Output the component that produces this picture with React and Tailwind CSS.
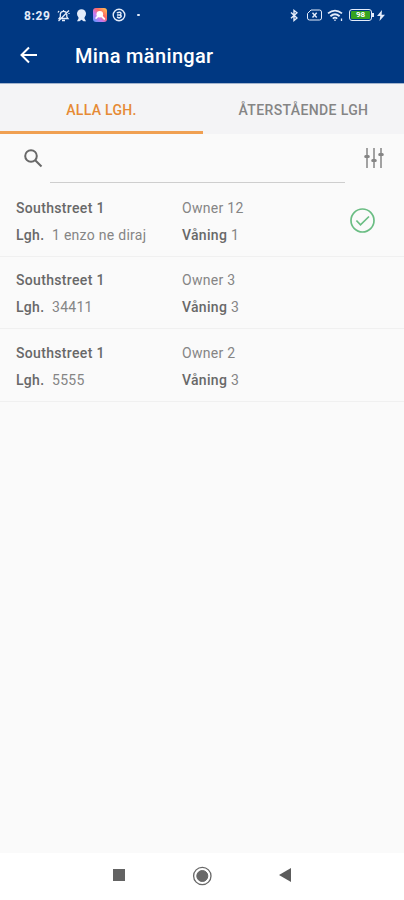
const apartments = [
  { street: 'Southstreet 1', owner: 'Owner 12', unit: '1 enzo ne diraj', floor: '1', done: true },
  { street: 'Southstreet 1', owner: 'Owner 3', unit: '34411', floor: '3' },
  { street: 'Southstreet 1', owner: 'Owner 2', unit: '5555', floor: '3' },
];

function StatusBar() {
  return (
    <div className="flex h-[30px] items-center justify-between pl-6 pr-[19px] text-[#e4ecfa]">
      <div className="flex items-center">
        <span className="w-[33px] pt-px text-[12px] font-bold leading-none tracking-[0.6px]">8:29</span>
        <svg className="h-[13px] w-[13px]" viewBox="0 0 13 13" fill="none" stroke="currentColor" strokeWidth="1.3">
          <path d="M2 9.5h9L9.8 7.8V5.2A3.3 3.3 0 0 0 3.3 5.2v2.6zM5 11.5h3M1.5 12 12 1.5M6.5 2V1M1 3.5l1-1.5M12 5V4" />
        </svg>
        <svg className="ml-[6px] h-[13px] w-[11px]" viewBox="0 0 11 13" fill="currentColor">
          <circle cx="5.5" cy="4.8" r="4.5" />
          <path d="M2.5 7h6v2.5l1.5 2.8H7.6L5.5 10.8l-2.1 1.5H1l1.5-2.8z" />
        </svg>
        <svg className="ml-[6px] h-[14px] w-[14px]" viewBox="0 0 14 14">
          <defs>
            <linearGradient id="gallery" x1="0" y1="1" x2="1" y2="0">
              <stop offset="0" stopColor="#4e9bff" />
              <stop offset=".35" stopColor="#c678f0" />
              <stop offset=".62" stopColor="#ff6a62" />
              <stop offset="1" stopColor="#ffcf50" />
            </linearGradient>
          </defs>
          <rect width="14" height="14" rx="3" fill="url(#gallery)" />
          <circle cx="6.8" cy="6.2" r="3.3" fill="#fff" />
          <path d="m8.5 8 2.8 2.8M3.2 10l2-2.2" stroke="#fff" strokeWidth="1.8" strokeLinecap="round" fill="none" />
        </svg>
        <svg className="ml-[5px] h-[14px] w-[14px]" viewBox="0 0 14 14" fill="none" stroke="currentColor" strokeWidth="1.4">
          <circle cx="7" cy="7" r="5.8" />
          <path d="M4.8 4.8q4.2-1.5 4.2.7T5 7h3q3 1.5-1 3l-2-1" />
        </svg>
        <span className="ml-[11px] h-[2px] w-[3px] rounded-full bg-current" />
      </div>
      <div className="flex items-center">
        <svg className="h-[13px] w-[8px]" viewBox="0 0 8 13" fill="none" stroke="currentColor" strokeWidth="1.4">
          <path d="m1 3.5 6 5.5-3 2.5v-10l3 2.3-6 5.5" />
        </svg>
        <svg className="ml-[9px] h-[12px] w-[15px]" viewBox="0 0 15 12" fill="none" stroke="currentColor">
          <path d="M4 1h8.5a2 2 0 0 1 2 2v6a2 2 0 0 1-2 2h-10a2 2 0 0 1-2-2V4.5z" />
          <path d="m5.5 3.8 4.2 4.7m0-4.7L5.5 8.5" strokeWidth="1.4" />
        </svg>
        <svg className="ml-[5px] h-[13px] w-[17px]" viewBox="0 0 17 13" fill="none" stroke="currentColor" strokeWidth="1.8">
          <path d="M1 4.4q7-5.5 14 0M3.4 7.2q4.6-4 9.2 0M5.8 9.6q2.2-2 4.4 0" />
          <path d="M8 10.5v1.5M14.5 9.5v2.5" strokeWidth="1.3" />
        </svg>
        <div className="ml-[5px] flex h-[12px] w-[23px] items-center rounded-[3px] border border-current p-px">
          <span className="flex h-full w-full items-center justify-center rounded-[1px] bg-[#36a31f] text-[8px] font-bold leading-none text-white">98</span>
        </div>
        <span className="h-[4px] w-[2px] bg-current" />
        <svg className="ml-[3px] h-[11px] w-[8px]" viewBox="0 0 8 11" fill="currentColor">
          <path d="M5 0 0 6h3.3L2.5 11 8 4.7H4.6z" />
        </svg>
      </div>
    </div>
  );
}

function ApartmentRow({ item }) {
  return (
    <li className="flex h-[72.7px] items-start border-b border-[#f0f0f0] pl-4 pt-[10.7px] text-[14px] leading-[27px] text-[#858585]">
      <div className="w-[166px] whitespace-nowrap">
        <p className="font-medium tracking-[0.33px] text-[#686868]">{item.street}</p>
        <p><span className="inline-block w-9 font-medium tracking-[0.3px] text-[#686868]">Lgh.</span><span className="tracking-[0.28px]">{item.unit}</span></p>
      </div>
      <div className="w-[168px]">
        <p className="tracking-[0.3px]">{item.owner}</p>
        <p className="tracking-[0.3px]"><span className="font-medium text-[#686868]">Våning</span> {item.floor}</p>
      </div>
      {item.done && (
        <svg className="mt-[13px] h-[25px] w-[25px]" viewBox="0 0 25 25" fill="none" stroke="#6abd83">
          <circle cx="12.5" cy="12.5" r="11.5" strokeWidth="1.7" />
          <path d="m6.4 12.5 4.1 4.4L19 8.5" strokeWidth="1.7" />
        </svg>
      )}
    </li>
  );
}

export default function App() {
  return (
    <div className="flex h-[900px] w-[404px] flex-col overflow-hidden bg-[#fafafa] font-['Roboto',sans-serif]">
      <header className="h-[84px] shrink-0 border-b border-[#a3b4cd] bg-[#003882] text-white">
        <StatusBar />
        <div className="flex h-[53px] items-center pl-5">
          <svg className="-mt-[4px] h-[18px] w-[18px]" viewBox="0 0 18 18" fill="none" stroke="currentColor" strokeWidth="2">
            <path d="M17 9H2M9 1.5 1.5 9 9 16.5" />
          </svg>
          <h1 className="-mt-[2px] ml-[37px] text-[20px] font-medium tracking-[0.33px]">Mina mäningar</h1>
        </div>
      </header>
      <nav className="grid h-[50px] shrink-0 grid-cols-[203px_201px] bg-[#f4f4f6] text-[14px] font-medium">
        <button className="border-b-[3px] border-[#f0a052] pt-[5px] tracking-[0.3px] text-[#e68a35]">ALLA LGH.</button>
        <button className="pt-[2px] tracking-[0.37px] text-[#858585]">ÅTERSTÅENDE LGH</button>
      </nav>
      <div className="flex h-[50px] shrink-0 items-start pl-6 pr-5">
        <svg className="mt-[15px] h-[19px] w-[19px] shrink-0" viewBox="0 0 19 19" fill="none" stroke="#686868" strokeWidth="2">
          <circle cx="7" cy="7" r="5.8" />
          <path d="m11.2 11.2 6.3 6.3" />
        </svg>
        <div className="ml-[7px] h-[49px] w-[295px] border-b border-[#cecece]" />
        <svg className="ml-[19px] mt-[13px] h-[22px] w-[20px] shrink-0" viewBox="0 0 20 22" fill="none" stroke="#858585" strokeWidth="1.5">
          <path d="M3 1v20M10 1v20M17 1v20" />
          <path d="M1.7 9.5h2.6M8.7 13.5h2.6M15.7 7.5h2.6" strokeWidth="3" strokeLinecap="round" />
        </svg>
      </div>
      <ul className="flex-1">
        {apartments.map((item, index) => <ApartmentRow key={index} item={item} />)}
      </ul>
      <footer className="flex h-[47px] shrink-0 items-center bg-white pb-[3px] pl-[113px]">
        <span className="h-[12px] w-[12px] bg-[#636363]" />
        <svg className="ml-[67px] mt-px h-[20px] w-[20px]" viewBox="0 0 20 20" fill="none" stroke="#686868">
          <circle cx="10.3" cy="10" r="8.7" strokeWidth="1.3" />
          <circle cx="10.3" cy="10" r="5.5" fill="#686868" />
        </svg>
        <svg className="ml-[67px] h-[14px] w-[12px]" viewBox="0 0 12 14" fill="#5c5c5c"><path d="M12 0v14L0 7z" /></svg>
      </footer>
    </div>
  );
}
